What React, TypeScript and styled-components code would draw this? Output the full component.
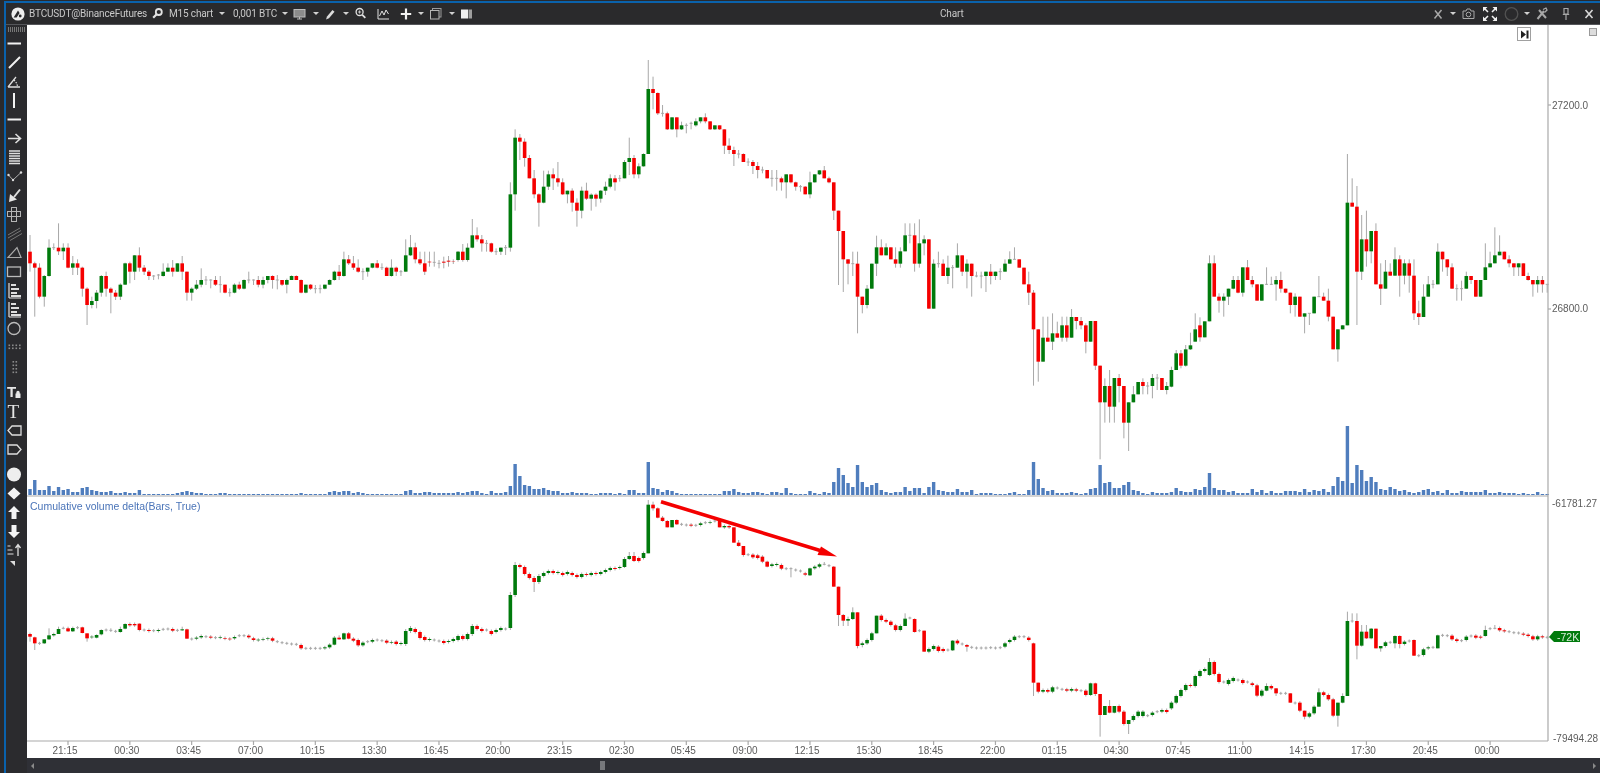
import React from 'react';
import styled, { createGlobalStyle } from 'styled-components';

type Row = number[];
interface Candle {
  o: number;
  c: number;
  h: number;
  l: number;
}

// rows are read off the screen: open, close, high, low (wicks optional)
const toCandles = (origin: number, scale: number, rows: Row[]): Candle[] =>
  rows.map(([o, c = o, h, l]) => {
    const top = origin + Math.min(o, c) / scale;
    const bottom = origin + Math.max(o, c) / scale;
    return {
      o: origin + o / scale,
      c: origin + c / scale,
      h: h === undefined ? top - 1.5 : origin + h / scale,
      l: l === undefined ? bottom + 1.5 : origin + l / scale,
    };
  });

const price: Candle[] = [
  ...toCandles(200, 3, [
    [215, 155, 150, 218], [155, 190, 105, 215], [190, 203, 185, 350], [203, 290, 190, 295], [290, 228, 225, 320],
    [228, 143, 118, 230], [143, 143, 130, 150], [143, 154, 70, 165], [154, 143, 130, 180], [143, 203, 130, 205],
    [203, 190, 168, 225], [190, 203, 178, 225], [203, 266, 200, 290], [266, 315, 262, 375], [315, 303, 290, 325],
    [303, 278, 270, 325], [278, 228, 225, 290], [228, 266, 215, 290], [266, 278, 262, 340], [278, 290, 270, 300],
    [290, 254, 250, 300], [254, 190, 188, 255], [190, 215, 185, 250], [215, 166, 165, 240], [166, 203, 142, 215],
    [203, 215, 195, 225], [215, 228, 210, 240], [228, 228, 225, 240], [225, 225, 222, 238], [228, 215, 190, 230],
    [215, 203, 190, 215], [203, 215, 180, 230], [215, 190, 190, 215], [190, 215, 168, 240], [215, 278, 215, 302],
    [278, 266, 262, 302], [266, 254, 240, 270], [254, 240, 205, 262], [240, 240, 228, 255], [240, 240, 238, 265],
    [240, 254, 228, 258], [254, 254, 228, 278], [254, 278, 254, 280], [278, 278, 265, 290], [278, 254, 250, 280],
    [254, 266, 245, 270], [266, 240, 238, 268], [240, 240, 215, 250], [240, 240, 238, 255], [240, 254, 228, 262],
    [254, 240, 230, 265], [240, 228, 228, 250], [228, 240, 226, 266], [240, 240, 225, 268], [240, 254, 240, 258],
    [254, 240, 236, 280], [240, 228, 226, 240], [228, 240, 226, 240], [240, 278, 238, 280], [278, 254, 254, 280],
    [254, 266, 252, 270], [266, 266, 255, 280], [266, 266, 254, 280], [266, 254, 254, 268], [254, 240, 238, 255],
    [240, 215, 212, 242], [215, 228, 195, 240], [228, 178, 155, 230], [178, 190, 165, 195], [190, 203, 168, 210],
    [203, 215, 178, 218], [215, 215, 205, 240], [215, 203, 203, 230], [203, 190, 190, 205], [190, 203, 180, 205],
    [203, 203, 190, 210], [203, 228, 200, 228], [228, 203, 178, 230], [203, 215, 200, 228], [215, 215, 210, 228],
    [215, 166, 118, 215], [166, 142, 105, 168], [142, 178, 128, 190], [178, 190, 155, 195], [190, 215, 155, 225],
  ]),
  ...toCandles(60, 3, [
    [605, 607, 575, 620], [607, 607, 575, 620], [610, 610, 600, 625], [605, 608, 590, 625], [602, 605, 588, 620],
    [605, 606, 598, 612], [600, 575, 573, 605], [575, 600, 552, 605], [600, 563, 550, 605], [563, 526, 477, 565],
    [526, 538, 502, 545], [538, 550, 525, 575], [550, 550, 540, 575], [550, 575, 548, 578], [575, 575, 565, 585],
    [575, 563, 563, 585], [563, 563, 555, 585], [563, 403, 367, 575], [403, 233, 208, 452], [233, 245, 222, 300],
    [245, 294, 235, 320], [294, 355, 285, 355], [355, 403, 330, 415], [403, 428, 400, 500], [428, 380, 332, 430],
    [380, 343, 332, 390], [343, 355, 325, 390], [355, 367, 306, 380], [367, 403, 355, 405], [403, 392, 392, 430],
    [392, 428, 385, 455], [428, 452, 415, 500], [452, 392, 380, 475], [392, 416, 368, 420], [416, 404, 400, 452],
    [404, 416, 400, 440], [416, 392, 390, 428], [392, 380, 365, 405], [380, 355, 343, 385], [355, 367, 345, 392],
    [355, 355, 345, 365], [355, 306, 300, 355], [306, 294, 233, 345], [294, 343, 285, 355], [343, 319, 310, 355],
    [319, 282, 280, 320], [282, 87, 0, 282], [87, 99, 50, 148], [99, 160, 97, 165], [160, 160, 135, 170],
    [160, 208, 155, 210], [208, 172, 172, 210], [172, 208, 172, 232], [208, 196, 185, 210], [196, 196, 190, 220],
    [190, 190, 185, 208], [196, 184, 175, 200], [184, 172, 172, 190], [172, 184, 160, 190], [184, 208, 184, 210],
    [208, 196, 196, 210], [196, 208, 196, 210], [208, 257, 208, 282], [257, 270, 235, 282], [270, 282, 260, 318],
    [282, 282, 270, 295], [282, 306, 280, 306], [306, 306, 295, 318], [306, 318, 300, 342], [318, 330, 306, 355],
    [330, 330, 320, 340], [330, 355, 330, 355], [355, 355, 330, 380], [355, 355, 330, 392], [355, 367, 350, 392],
    [367, 343, 343, 415], [343, 367, 343, 370], [367, 380, 365, 392], [380, 380, 375, 395], [380, 403, 378, 403],
    [403, 367, 335, 415], [367, 343, 343, 368], [343, 331, 330, 345], [331, 355, 318, 355], [355, 367, 350, 370],
    [367, 452, 367, 480],
  ]),
  ...toCandles(190, 3, [
    [62, 123, 62, 285], [123, 208, 123, 306], [208, 221, 208, 283], [221, 221, 185, 258], [221, 320, 185, 430],
    [320, 345, 320, 370], [345, 296, 285, 355], [296, 221, 221, 296], [221, 172, 137, 258], [172, 196, 148, 196],
    [196, 172, 160, 196], [172, 208, 172, 208], [208, 221, 172, 233], [221, 184, 172, 233], [184, 136, 100, 184],
    [136, 136, 100, 160], [136, 221, 100, 245], [221, 160, 88, 233], [160, 148, 136, 196], [148, 356, 148, 356],
    [356, 221, 208, 356], [221, 221, 185, 233], [221, 258, 208, 258], [258, 233, 197, 282], [233, 233, 225, 295],
    [233, 196, 160, 233], [196, 245, 196, 258], [245, 221, 208, 295], [221, 258, 221, 320], [258, 258, 245, 262],
    [258, 258, 245, 295], [258, 245, 245, 306], [245, 258, 222, 283], [258, 245, 245, 270], [245, 245, 235, 270],
    [245, 221, 208, 245], [221, 208, 184, 221], [208, 208, 172, 208], [208, 233, 208, 233], [233, 283, 233, 283],
    [283, 308, 245, 345], [308, 418, 300, 587], [418, 515, 418, 575], [515, 443, 380, 515], [443, 455, 380, 455],
    [455, 430, 370, 480], [430, 443, 395, 443], [443, 406, 380, 455], [406, 443, 380, 455], [443, 381, 357, 443],
    [381, 393, 381, 418], [393, 406, 381, 418], [406, 455, 400, 490], [455, 393, 393, 455], [393, 527, 393, 540],
    [527, 637, 527, 808], [637, 588, 565, 698], [588, 650, 540, 698], [650, 564, 564, 698], [564, 588, 552, 637],
    [588, 698, 588, 745], [698, 637, 637, 783], [637, 613, 588, 637], [613, 576, 576, 613], [576, 588, 565, 613],
    [588, 588, 576, 613], [588, 564, 552, 625], [564, 564, 552, 600], [564, 600, 564, 600], [600, 588, 576, 613],
  ]),
  ...toCandles(150, 3, [
    [710, 660, 650, 712], [660, 610, 600, 660], [610, 647, 600, 655], [647, 598, 585, 650], [598, 586, 548, 600],
    [575, 538, 490, 575], [526, 562, 502, 575], [562, 514, 514, 562], [514, 340, 316, 514], [340, 440, 316, 440],
    [440, 452, 430, 488], [452, 440, 430, 500], [440, 416, 416, 465], [416, 390, 378, 418], [390, 428, 378, 430],
    [428, 352, 352, 440], [352, 390, 330, 390], [390, 403, 378, 412], [403, 452, 403, 452], [452, 403, 403, 452],
    [403, 403, 352, 405], [403, 403, 380, 405], [403, 390, 378, 452], [390, 416, 365, 428], [416, 428, 416, 430],
    [428, 465, 428, 490], [465, 440, 430, 500], [440, 500, 440, 500], [500, 490, 490, 550], [490, 490, 490, 525],
    [490, 440, 440, 490], [440, 440, 378, 440], [440, 452, 428, 452], [452, 500, 416, 514], [500, 598, 500, 598],
    [598, 538, 538, 635], [538, 526, 525, 538], [526, 158, 12, 526], [158, 170, 85, 170], [170, 365, 108, 525],
    [365, 268, 195, 390], [268, 304, 182, 350], [304, 243, 243, 340], [243, 403, 220, 403], [403, 416, 340, 465],
    [416, 365, 330, 416], [365, 377, 340, 377], [377, 328, 292, 377], [328, 377, 316, 440], [377, 340, 328, 403],
    [340, 377, 328, 428], [377, 490, 328, 510], [490, 501, 452, 525], [501, 440, 403, 501], [440, 403, 378, 440],
    [403, 403, 390, 415], [403, 305, 280, 403], [305, 328, 305, 365], [328, 352, 328, 378], [352, 416, 340, 416],
    [416, 416, 403, 452], [416, 416, 392, 452], [416, 378, 365, 416], [378, 390, 378, 402], [390, 440, 390, 440],
    [440, 390, 390, 440], [390, 352, 280, 390], [352, 340, 305, 352], [340, 316, 232, 340], [316, 305, 256, 316],
    [305, 328, 305, 328], [328, 340, 316, 352], [340, 352, 340, 378], [352, 340, 340, 378], [340, 378, 340, 378],
    [378, 390, 368, 392], [390, 403, 390, 440], [403, 390, 378, 428], [390, 403, 378, 428], [403, 403, 403, 428],
  ]),
];

const delta: Candle[] = [
  ...toCandles(450, 3, [
    [575, 558], [552, 560, 548, 575], [562, 580, 560, 600], [580], [580, 568, 568, 582], [568, 556, 535, 570],
    [556, 552, 548, 560], [552, 537, 530, 552], [535, 535, 530, 538], [535, 544, 530, 546], [544, 534, 530, 546],
    [533], [532, 549, 530, 550], [550, 565, 550, 575], [562, 560], [563, 555, 553, 565], [553, 540, 538, 556],
    [540], [541, 541, 535, 546], [544], [546, 537, 530, 548], [536, 522, 520, 538], [522, 526], [522, 526],
    [521, 540, 520, 544], [540], [540, 543], [542], [543, 540], [538], [537], [537, 542], [541],
    [541, 538, 530, 543], [538, 566, 536, 566], [567], [566, 563], [562, 558], [560], [560, 563], [563],
    [563, 561], [564, 566], [566, 568], [565, 561], [557], [557], [557, 562], [565, 570], [571, 569], [569, 567],
    [567, 565], [565, 572], [575], [578], [580], [582], [583], [585, 595], [595], [595], [595], [595],
    [595, 592], [592, 584], [584, 563, 558, 586], [563, 568, 556, 570], [568, 550, 548, 570], [550, 566, 546, 568],
    [566, 572], [570, 586], [586, 578], [575], [575, 570], [570], [572], [572, 578], [578, 576], [575, 582],
  ]),
  ...toCandles(0, 1, [
    [644, 643], [644, 631, 629, 646], [631, 628, 626, 633], [629, 632], [632, 638], [637, 640], [640, 639], [640],
    [641], [641, 643], [642, 641], [641, 639], [640, 636], [636, 639], [639, 634], [634, 626, 624, 636], [626, 629],
    [629, 631], [630], [631, 634], [632, 630], [630, 628], [629], [628, 595, 592, 630], [595, 565, 562, 597],
    [565, 567], [567, 574], [574, 578], [578, 582, 576, 592], [582, 576, 574, 584], [576, 573], [573, 571],
    [571, 573], [573, 572], [573, 575], [574, 572], [573, 575], [575, 577], [577, 574], [574, 575], [575, 573],
    [573, 574], [574, 572], [572, 570], [570, 568], [568, 569], [568, 567], [567, 559, 557, 568], [559, 556, 552, 560],
    [556, 561, 552, 562], [558, 561], [558, 553],
  ]),
  ...toCandles(470, 3, [
    [250, 104, 90, 250], [104, 115, 95, 122], [115, 143, 112, 145], [143, 153, 138, 155], [153, 172, 150, 172],
    [172, 150, 150, 172], [150, 163, 148, 165], [163], [165], [164, 167], [166], [165, 160], [158], [158, 156], [153],
    [153, 172, 150, 172], [172, 168], [168, 172], [172, 218, 172, 218], [218, 228, 210, 230], [228, 255, 228, 260],
    [254], [254, 262], [256, 264], [260, 275], [275, 290, 272, 292], [288, 283], [285, 282], [285, 296], [296],
    [296, 296, 292, 322], [300], [303], [310, 314], [316, 295, 293, 318], [295, 290], [290, 283], [283, 283, 276, 286],
    [287], [290, 350, 288, 350], [350, 435, 350, 468], [435, 452, 432, 468], [452, 447, 440, 468], [447, 427, 412, 450],
    [427, 528, 427, 535], [525, 520, 515, 532], [520, 510], [510, 490], [490, 437, 437, 490], [437, 450], [450, 455],
    [455, 465], [466, 480], [480, 468], [468, 446, 430, 468], [444, 444, 440, 448], [447, 486, 445, 488], [482],
    [482, 545, 482, 545], [545, 537], [537, 528], [530, 543], [537, 543], [540], [541, 512, 510, 543], [512, 520],
    [522], [525, 530, 522, 545], [532], [534], [534], [534], [533], [534], [533], [530, 520], [516, 510], [510, 500],
    [500], [500], [503, 510], [520, 638, 518, 678], [638, 665, 638, 670], [665, 660], [660, 665], [665, 652], [654],
    [658], [658, 662], [662, 657], [658, 662], [662], [662, 675], [675, 640, 638, 678], [640, 672, 638, 678],
    [672, 735, 672, 800], [735, 708, 708, 735], [708, 728, 690, 730], [728, 708, 708, 730], [708, 725], [725, 762],
    [762, 750, 750, 792], [750, 738], [738, 725], [738, 725], [737], [735, 728], [725], [725, 720], [720, 726],
    [715, 698], [698, 678],
  ]),
  ...toCandles(0, 1, [
    [696, 690], [690, 685], [685, 686], [686, 676], [676, 671], [671, 669], [675, 662, 658, 676], [662, 674],
    [674, 682], [682], [684, 680], [681, 678], [680], [680, 683], [682],
  ]),
  ...toCandles(560, 3, [
    [370, 375], [376, 407], [407, 392], [392, 378, 370, 394], [378, 385], [385, 400, 385, 408], [400], [400],
    [400, 428, 400, 428], [429], [428, 452], [452, 470, 452, 478], [470, 460], [460, 440], [440, 397, 385, 440],
    [397, 405], [405, 418], [418, 467], [467, 428, 428, 500], [428, 408, 400, 430], [408, 183, 155, 408],
    [183, 183, 160, 188], [183, 257, 160, 298], [257, 215, 195, 260], [215, 235, 195, 237], [235, 206, 204, 238],
    [206, 265, 206, 265], [265, 258, 258, 275], [258, 247], [247], [250, 228, 226, 265], [228, 252, 226, 265],
    [252, 245], [243], [240, 287, 238, 288], [287], [285, 268], [265, 262], [262], [265, 226, 224, 265], [226],
    [227], [227, 238], [238, 243], [242], [240, 230], [228], [227, 233], [230, 233], [228, 210, 197, 230],
    [206], [205, 205, 195, 208], [204, 211], [211, 214], [215], [218], [219], [221, 224], [224, 228], [229, 238],
    [238, 229], [229, 232], [232],
  ]),
];

const volumes = [
  6, 15, 5, 5, 9, 4, 8, 5, 6, 3, 3, 7, 8, 5, 4, 3, 3, 4, 2, 2, 3, 2, 2, 5, 1, 1, 1, 1, 1, 1, 1, 2, 3, 4, 3, 2, 2, 1, 1, 1,
  2, 2, 1, 1, 1, 1, 1, 1, 1, 1, 1, 1, 1, 1, 1, 1, 1, 2, 1, 1, 1, 1, 1, 3, 4, 3, 4, 4, 2, 3, 2, 1, 1, 1, 1, 1, 1, 1,
  1, 4, 5, 2, 2, 3, 3, 2, 2, 2, 2, 2, 3, 2, 3, 4, 4, 2, 1, 4, 2, 2, 3, 9, 31, 19, 10, 9, 6, 6, 7, 5, 4, 4, 2, 2, 3, 2,
  2, 2, 1, 1, 2, 2, 2, 1, 2, 1, 5, 5, 2, 2, 33, 7, 6, 3, 5, 4, 2, 1, 1, 1, 1, 1, 1, 1, 1, 1, 4, 4, 6, 3, 2, 2, 3, 3, 2, 1,
  3, 3, 2, 7, 2, 1, 1, 1, 4, 2, 1, 3, 2, 13, 27, 20, 12, 8, 30, 13, 8, 10, 12, 5, 3, 2, 3, 3, 8, 4, 7, 7, 2, 8, 13, 5, 4,
  3, 3, 6, 3, 3, 5, 1, 2, 2, 2, 1, 1, 1, 2, 3, 1, 1, 5, 33, 16, 7, 4, 5, 2, 2, 2, 3, 2, 1, 2, 6, 7, 30, 12, 13, 7, 7, 10,
  13, 5, 4, 2, 1, 3, 2, 2, 2, 3, 7, 4, 3, 3, 6, 5, 8, 22, 7, 5, 5, 3, 4, 2, 2, 2, 6, 3, 5, 2, 4, 2, 2, 4, 4, 4, 3, 6, 3,
  5, 4, 6, 3, 9, 18, 14, 69, 12, 30, 25, 14, 18, 13, 6, 5, 8, 6, 4, 5, 3, 2, 3, 5, 6, 3, 4, 2, 5, 2, 2, 4, 3, 3, 3, 3,
  5, 2, 2, 3, 2, 2, 2, 1, 2, 1, 1, 3, 1, 1,
];

const timeLabels = [
  '21:15', '00:30', '03:45', '07:00', '10:15', '13:30', '16:45', '20:00', '23:15', '02:30', '05:45', '09:00',
  '12:15', '15:30', '18:45', '22:00', '01:15', '04:30', '07:45', '11:00', '14:15', '17:30', '20:45', '00:00',
];

const RIGHT = 1548;
const barX = (i: number) => 30 + 4.756 * (i - 1);

const GlyphT = styled.text<{ $size: number; $bold?: boolean }>`
  font-family: ${p => (p.$bold ? '"Liberation Sans", sans-serif' : '"Liberation Serif", serif')};
  font-size: ${p => p.$size}px;
  font-weight: ${p => (p.$bold ? 700 : 400)};
  fill: #e6e6e6;
  stroke: none;
`;

const Candles = ({ data }: { data: Candle[] }) => (
  <g>
    {data.map((d, i) => {
      const x = barX(i);
      const top = Math.min(d.o, d.c);
      const height = Math.abs(d.o - d.c);
      return (
        <g key={i}>
          <Wick x1={x} x2={x} y1={d.h} y2={d.l} />
          {height === 0 ? (
            <Wick x1={x - 1.5} x2={x + 1.5} y1={top} y2={top} />
          ) : (
            <CandleBody x={x - 1.8} y={top} width={3.6} height={height} $up={d.c < d.o} />
          )}
        </g>
      );
    })}
  </g>
);

const Plot = () => (
  <Chart viewBox="27 25 1573 733" aria-label="Chart">
    <Candles data={price} />
    {volumes.map((v, i) => (
      <VolumeBar key={i} x={barX(i + 1) - 1.7} y={495 - v} width={3.4} height={v} />
    ))}
    <Candles data={delta} />

    <AxisLine x1={27} x2={RIGHT} y1={496} y2={496} />
    <AxisLine x1={RIGHT} x2={RIGHT} y1={25} y2={741} />
    <AxisLine x1={27} x2={RIGHT} y1={741} y2={741} />

    <PaneTitle x={30} y={510}>Cumulative volume delta(Bars, True)</PaneTitle>

    {timeLabels.map((label, i) => {
      const x = 68 + 61.83 * i;
      return (
        <g key={label + i}>
          <AxisLine x1={x} x2={x} y1={741} y2={745} />
          <AxisText x={x - 3} y={754} textAnchor="middle">{label}</AxisText>
        </g>
      );
    })}

    <AxisLine x1={RIGHT} x2={RIGHT + 3} y1={105} y2={105} />
    <AxisLine x1={RIGHT} x2={RIGHT + 3} y1={309} y2={309} />
    <AxisText x={1552} y={109}>27200.0</AxisText>
    <AxisText x={1552} y={312}>26800.0</AxisText>
    <AxisText x={1552} y={507}>-61781.27</AxisText>
    <AxisText x={1553} y={742}>-79494.28</AxisText>

    <polygon points="1549,637 1554,631 1580,631 1580,642 1554,642" fill="#007a0c" />
    <TagText x={1557} y={640.5}>-72K</TagText>

    <path d="M661 501.7L825 552" stroke="#f40000" strokeWidth={3.6} fill="none" />
    <polygon points="837,556.5 821,546.5 817.5,555" fill="#f40000" />
  </Chart>
);

const HeadIcon = ({ ml, w = 14, dim, children }: { ml?: number; w?: number; dim?: boolean; children: React.ReactNode }) => (
  <HeadSvg $ml={ml} width={w} height={16} viewBox={`0 0 ${w} 16`} fill="none" stroke={dim ? '#a8a8a8' : '#e2e2e2'}>
    {children}
  </HeadSvg>
);

const HeaderLeft = () => (
  <HeaderGroup>
    <HeadIcon w={16}>
      <circle cx="8" cy="8" r="6.6" fill="#eee" stroke="none" />
      <path d="M3.6 11.5L8 4.5l1.6 2.6L6.6 11.5z" fill="#2a2a2c" stroke="none" />
      <circle cx="10.2" cy="10" r="1.4" fill="#2a2a2c" stroke="none" />
    </HeadIcon>
    <HeadLabel $ml={3} $w={118}>BTCUSDT@BinanceFutures</HeadLabel>
    <HeadIcon ml={5} w={11}>
      <circle cx="6.8" cy="6" r="3" strokeWidth="1.8" />
      <path d="M4.6 8.3L1.2 11.8" strokeWidth="2.2" />
    </HeadIcon>
    <HeadLabel $ml={6} $w={44}>M15 chart</HeadLabel>
    <Caret $ml={6} />
    <HeadLabel $ml={8} $w={43}>0,001 BTC</HeadLabel>
    <Caret $ml={6} />
    <HeadIcon ml={5} w={13}>
      <rect x="1" y="3.5" width="11" height="7.5" fill="#8c8c8c" stroke="#bdbdbd" />
      <path d="M4 13h5M6.5 11v2" stroke="#bdbdbd" />
    </HeadIcon>
    <Caret $ml={7} />
    <HeadIcon ml={5} w={11}>
      <path d="M2 13.5l1-3 5.5-6.5 2 1.8-5.5 6.5z" fill="#dcdcdc" stroke="none" />
    </HeadIcon>
    <Caret $ml={8} />
    <HeadIcon ml={6} w={11}>
      <circle cx="4.6" cy="6" r="3.5" strokeWidth="1.3" />
      <path d="M7.3 8.8l3 3" strokeWidth="1.8" />
      <path d="M3 6h3.2M4.6 4.4v3.2" strokeWidth=".8" />
    </HeadIcon>
    <HeadIcon ml={11} w={13}>
      <path d="M1 3v10h11" strokeWidth="1" />
      <path d="M2.5 10l2.5-5 2 4 2-5 2.5 4" strokeWidth="1" />
    </HeadIcon>
    <HeadIcon ml={10} w={12}>
      <path d="M6 2.5v11M.8 8h10.4" strokeWidth="2.2" stroke="#f2f2f2" />
    </HeadIcon>
    <Caret $ml={6} />
    <HeadIcon ml={5} w={13}>
      <rect x="3.5" y="2.5" width="8.5" height="8.5" stroke="#9a9a9a" />
      <rect x="1.5" y="4.5" width="8.5" height="8.5" stroke="#b5b5b5" fill="#2a2a2c" />
    </HeadIcon>
    <Caret $ml={7} />
    <HeadIcon ml={5} w={13}>
      <rect x="1" y="3.5" width="7" height="9" fill="#f0f0f0" stroke="none" />
      <rect x="8.5" y="3.5" width="3.5" height="9" fill="#9e9e9e" stroke="none" />
    </HeadIcon>
  </HeaderGroup>
);

const HeaderRight = () => (
  <HeaderGroup>
    <HeadIcon w={10} dim>
      <path d="M1.5 12.5L8.5 4M2 4.5l6.5 8" strokeWidth="1.5" />
    </HeadIcon>
    <Caret $ml={7} />
    <HeadIcon ml={6} w={13} dim>
      <path d="M1 5h3l1-2h3l1 2h3v7.5H1z" />
      <circle cx="6.5" cy="8.5" r="2.3" />
    </HeadIcon>
    <HeadIcon ml={7} w={16}>
      <path d="M2 2l4 4M14 2l-4 4M2 14l4-4M14 14l-4-4" strokeWidth="1.6" stroke="#f2f2f2" />
      <path d="M1 1h4.5L1 5.5zM15 1h-4.5L15 5.5zM1 15h4.5L1 10.5zM15 15h-4.5L15 10.5z" fill="#f2f2f2" stroke="none" />
    </HeadIcon>
    <HeadIcon ml={6} w={15}>
      <circle cx="7.5" cy="8" r="6.3" stroke="#525252" strokeWidth="1.3" />
    </HeadIcon>
    <Caret $ml={5} />
    <HeadIcon ml={6} w={12} dim>
      <path d="M1.5 13L8 5M3 4l7 8" strokeWidth="2" />
      <path d="M7 3.5l3-1.5 1 2-2.5 2.5" strokeWidth="1.3" />
    </HeadIcon>
    <HeadIcon ml={14} w={8} dim>
      <path d="M2 2.5h4V8H2zM.8 8.5h6.4M4 9v5" strokeWidth="1.2" />
    </HeadIcon>
    <HeadIcon ml={14} w={10}>
      <path d="M1.5 4l7 8M8.5 4l-7 8" strokeWidth="1.6" stroke="#d8d8d8" />
    </HeadIcon>
  </HeaderGroup>
);

const dots = (vertical: boolean) =>
  [0, 1, 2, 3].flatMap(a =>
    [0, 1].map(b => {
      const u = 2.5 + a * 3.5;
      const v = 7.5 + b * 3;
      return <rect key={`${a}${b}`} x={vertical ? v - 1 : u} y={vertical ? u + 1.5 : v - 1} width="1.6" height="1.6" fill="#8a8a8a" stroke="none" />;
    }),
  );

const ToolIcon = ({ children }: { children: React.ReactNode }) => (
  <ToolSvg width={21} height={19} viewBox="0 0 21 19" fill="none" stroke="#dedede">
    {children}
  </ToolSvg>
);

const fib = (
  <>
    <path d="M3 2v15M3 17h12" strokeWidth="1.2" />
    <path d="M5 4h5M5 8h8M5 12h6M5 15h10" strokeWidth="2" />
  </>
);

const drawTools: React.ReactNode[] = [
  <path d="M1.5 9.5H15" strokeWidth="2" stroke="#f2f2f2" />,
  <path d="M3 15L14 4" strokeWidth="2" stroke="#f2f2f2" />,
  <>
    <path d="M2 15H14M2 15L10 5" strokeWidth="1.3" />
    <path d="M8 8l2.5 3 1 3" strokeWidth="1.2" strokeDasharray="1.5 1.2" />
  </>,
  <path d="M8 2V17" strokeWidth="2" stroke="#f2f2f2" />,
  <path d="M1.5 9.5H15" strokeWidth="2" stroke="#f2f2f2" />,
  <path d="M2 9.5H14M9.5 5l5 4.5-5 4.5" strokeWidth="1.6" />,
  <path d="M3 3h11M3 5.5h11M3 8h11M3 10.5h11M3 13h11M3 15.5h11" strokeWidth="1.3" />,
  <>
    <path d="M2.5 8L7 13l8-7.5" strokeWidth=".9" stroke="#bbb" />
    <circle cx="2.5" cy="8" r="1.2" fill="#ddd" stroke="none" />
    <circle cx="7" cy="13" r="1.2" fill="#ddd" stroke="none" />
    <circle cx="15" cy="5.5" r="1.2" fill="#ddd" stroke="none" />
  </>,
  <>
    <path d="M14 3.5L8 11" strokeWidth="2" />
    <path d="M3 16l1-8 7 5.5z" fill="#e6e6e6" stroke="none" />
  </>,
  <>
    <rect x="5.5" y="2.5" width="5" height="14" stroke="#b5b5b5" />
    <rect x="1.5" y="6.5" width="13" height="5" stroke="#b5b5b5" />
  </>,
  <path d="M2 11l12-7M2 14l13-7.5M4 16.5l12-7" stroke="#777" />,
  <path d="M2 14.5h13l-4-10z" strokeWidth="1.2" stroke="#aaa" />,
  <rect x="1.5" y="5" width="13" height="9.5" strokeWidth="1.3" stroke="#bbb" />,
  fib,
  fib,
  <circle cx="8" cy="9.5" r="6" strokeWidth="1.3" stroke="#bbb" />,
];

const markTools: React.ReactNode[] = [
  <>
    <path d="M9.5 10.5h.8v-1a1.7 1.700 0 0 1 3.400 0v1h.8v4.500h-5z" fill="#e8e8e8" stroke="none" />
    <GlyphT x="1" y="14" $size={15} $bold>T</GlyphT>
  </>,
  <GlyphT x="1.5" y="16" $size={19}>T</GlyphT>,
  <path d="M6 5H15V14H6L2 9.5Z" strokeWidth="1.3" />,
  <path d="M2 5H11L15 9.5 11 14H2Z" strokeWidth="1.3" />,
];

const shapeTools: React.ReactNode[] = [
  <circle cx="8" cy="9.5" r="7" fill="#eeeeee" stroke="none" />,
  <path d="M8 3.5l6.5 6-6.5 6-6.5-6z" fill="#f4f4f4" stroke="none" />,
  <path d="M8 3l6 6h-3.5v7h-5V9H2z" fill="#f4f4f4" stroke="none" />,
  <path d="M8 16l6-6h-3.5V3h-5v7H2z" fill="#f4f4f4" stroke="none" />,
  <>
    <path d="M1.5 5h3M1.5 9h5M1.5 13h6" strokeWidth="1.2" />
    <path d="M12 15V4M9.5 7L12 3.5 14.5 7" strokeWidth="1.3" />
  </>,
];

const Sidebar = () => (
  <Side>
    <Grip />
    {drawTools.map((icon, i) => <ToolIcon key={i}>{icon}</ToolIcon>)}
    <ToolIcon>{dots(false)}</ToolIcon>
    <ToolIcon>{dots(true)}</ToolIcon>
    <ToolGap $h={7} />
    {markTools.map((icon, i) => <ToolIcon key={i}>{icon}</ToolIcon>)}
    <ToolGap $h={6} />
    {shapeTools.map((icon, i) => <ToolIcon key={i}>{icon}</ToolIcon>)}
    <Corner />
  </Side>
);

const App = () => (
  <>
    <GlobalStyle />
    <Frame>
      <Header>
        <HeaderLeft />
        <Title>Chart</Title>
        <HeaderRight />
      </Header>
      <Workspace>
        <Sidebar />
        <Main>
          <PlotArea>
            <Plot />
            <JumpButton>
              <svg width="9" height="9" viewBox="0 0 9 9">
                <path d="M1 .5L6 4.5 1 8.5z" fill="#222" />
                <rect x="6.5" y="0.5" width="2" height="8" fill="#222" />
              </svg>
            </JumpButton>
            <CornerBox />
          </PlotArea>
          <ScrollBar>
            <ScrollArrow $left />
            <ScrollThumb />
            <ScrollArrow />
          </ScrollBar>
        </Main>
      </Workspace>
    </Frame>
  </>
);

export default App;

const GlobalStyle = createGlobalStyle`
  html, body {
    margin: 0;
    height: 100%;
    overflow: hidden;
    background: #2a2a2c;
    font-family: "Liberation Sans", Arial, sans-serif;
  }
`;

const Frame = styled.div`
  display: flex;
  flex-direction: column;
  height: 772px;
  margin: 1px 0 0 4px;
  box-sizing: border-box;
  border-top: 2px solid #0a62ac;
  border-left: 2px solid #0a62ac;
`;

const Header = styled.header`
  display: grid;
  grid-template-columns: 934px 24px 1fr;
  align-items: center;
  flex: none;
  height: 22px;
  background: #2a2a2c;
  color: #c9c9c9;
  font-family: Roboto, sans-serif;
  font-size: 10px;
  letter-spacing: -0.15px;
  box-sizing: border-box;
  border-bottom: 1px solid #55565a;
  filter: blur(0.3px);
`;

const HeaderGroup = styled.div`
  display: flex;
  align-items: center;
  padding: 0 6px 0 4px;

  &:last-child {
    justify-content: flex-end;
  }
`;

const Caret = styled.span<{ $ml?: number }>`
  flex: none;
  width: 0;
  height: 0;
  margin-left: ${p => p.$ml ?? 0}px;
  border-left: 3px solid transparent;
  border-right: 3px solid transparent;
  border-top: 3.5px solid #d0d0d0;
`;

const HeadSvg = styled.svg<{ $ml?: number }>`
  flex: none;
  margin-left: ${p => p.$ml ?? 0}px;
`;

const HeadLabel = styled.span<{ $ml?: number; $w: number }>`
  flex: none;
  width: ${p => p.$w}px;
  margin-left: ${p => p.$ml ?? 0}px;
  white-space: nowrap;
`;

const Title = styled.span`
  color: #c9c9c9;
  white-space: nowrap;
`;

const Workspace = styled.div`
  display: flex;
  flex: 1;
  min-height: 0;
`;

const Side = styled.aside`
  display: flex;
  flex-direction: column;
  flex: none;
  width: 21px;
  background: #2b2b2e;
  padding-top: 2px;
  filter: blur(0.35px);
`;

const Grip = styled.div`
  flex: none;
  height: 5px;
  margin: 0 2px 2px 2px;
  background: repeating-linear-gradient(90deg, #777 0 1px, transparent 1px 2px);
`;

const ToolSvg = styled.svg`
  display: block;
  flex: none;
`;

const ToolGap = styled.div<{ $h: number }>`
  flex: none;
  height: ${p => p.$h}px;
`;

const Corner = styled.div`
  width: 0;
  height: 0;
  margin: 1px 0 0 4px;
  border-top: 5px solid #ddd;
  border-left: 5px solid transparent;
`;

const Main = styled.main`
  display: flex;
  flex-direction: column;
  flex: 1;
  min-width: 0;
  background: #fff;
`;

const PlotArea = styled.div`
  position: relative;
  flex: 1;
  min-height: 0;
`;

const Chart = styled.svg`
  display: block;
  width: 1573px;
  height: 733px;
  filter: blur(0.4px);
`;

const Wick = styled.line`
  stroke: #a8a8a8;
  stroke-width: 1;
`;

const CandleBody = styled.rect<{ $up: boolean }>`
  fill: ${p => (p.$up ? '#007a0c' : '#f50000')};
`;

const VolumeBar = styled.rect`
  fill: #4f7dbd;
`;

const AxisLine = styled.line`
  stroke: #a9a9a9;
  stroke-width: 1.2;
`;

const AxisText = styled.text`
  font-family: "Liberation Sans", Arial, sans-serif;
  font-size: 10px;
  fill: #5c5c5c;
`;

const PaneTitle = styled.text`
  font-family: "Liberation Sans", Arial, sans-serif;
  font-size: 10.5px;
  fill: #4a74b8;
`;

const TagText = styled.text`
  font-family: "Liberation Sans", Arial, sans-serif;
  font-size: 10.5px;
  fill: #d9ecd9;
`;

const JumpButton = styled.div`
  position: absolute;
  top: 2px;
  left: 1490px;
  display: flex;
  align-items: center;
  justify-content: center;
  width: 14px;
  height: 14px;
  box-sizing: border-box;
  border: 1px solid #a0a0a0;
  background: #fff;
`;

const CornerBox = styled.div`
  position: absolute;
  top: 3px;
  left: 1562px;
  width: 8px;
  height: 8px;
  box-sizing: border-box;
  border: 1px solid #999;
  background: #ddd;
`;

const ScrollBar = styled.div`
  display: flex;
  align-items: center;
  flex: none;
  height: 15px;
  padding: 0 4px;
  background: #2f3036;
`;

const ScrollThumb = styled.div`
  width: 5px;
  height: 9px;
  margin-left: 566px;
  background: #77787c;
`;

const ScrollArrow = styled.div<{ $left?: boolean }>`
  width: 0;
  height: 0;
  margin-left: ${p => (p.$left ? 0 : 'auto')};
  border-top: 3px solid transparent;
  border-bottom: 3px solid transparent;
  ${p => (p.$left ? 'border-right: 3px solid #8a8a8a;' : 'border-left: 3px solid #8a8a8a;')}
`;
